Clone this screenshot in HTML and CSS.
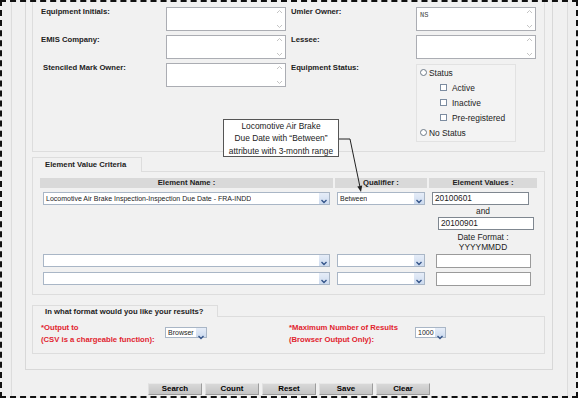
FILE: index.html
```html
<!DOCTYPE html>
<html>
<head>
    <title>Equipment Search</title>
    <link rel="stylesheet" href="styles.css">
</head>
<body>
<div class="page">
    <div class="outer">
        <div class="form">
            <div class="section top">
                <div class="col">
                    <div class="row">
                        <div class="lbl">Equipment Initials:</div>
                        <div class="ta"><span class="ta-val"></span><span class="ta-bar"><svg width="7" height="22" viewBox="0 0 7 22"><path d="M1 5 L3.5 2.5 L6 5" /><path d="M1 17 L3.5 19.5 L6 17" /></svg></span></div>
                    </div>
                    <div class="row">
                        <div class="lbl">EMIS Company:</div>
                        <div class="ta"><span class="ta-val"></span><span class="ta-bar"><svg width="7" height="22" viewBox="0 0 7 22"><path d="M1 5 L3.5 2.5 L6 5" /><path d="M1 17 L3.5 19.5 L6 17" /></svg></span></div>
                    </div>
                    <div class="row">
                        <div class="lbl lbl-shift">Stenciled Mark Owner:</div>
                        <div class="ta"><span class="ta-val"></span><span class="ta-bar"><svg width="7" height="22" viewBox="0 0 7 22"><path d="M1 5 L3.5 2.5 L6 5" /><path d="M1 17 L3.5 19.5 L6 17" /></svg></span></div>
                    </div>
                </div>
                <div class="col">
                    <div class="row">
                        <div class="lbl">Umler Owner:</div>
                        <div class="ta"><span class="ta-val">NS</span><span class="ta-bar"><svg width="7" height="22" viewBox="0 0 7 22"><path d="M1 5 L3.5 2.5 L6 5" /><path d="M1 17 L3.5 19.5 L6 17" /></svg></span></div>
                    </div>
                    <div class="row">
                        <div class="lbl">Lessee:</div>
                        <div class="ta"><span class="ta-val"></span><span class="ta-bar"><svg width="7" height="22" viewBox="0 0 7 22"><path d="M1 5 L3.5 2.5 L6 5" /><path d="M1 17 L3.5 19.5 L6 17" /></svg></span></div>
                    </div>
                    <div class="row">
                        <div class="lbl">Equipment Status:</div>
                        <div class="status">
                            <div class="opt"><span class="radio"></span>Status</div>
                            <div class="opt sub"><span class="check"></span>Active</div>
                            <div class="opt sub"><span class="check"></span>Inactive</div>
                            <div class="opt sub"><span class="check"></span>Pre-registered</div>
                            <div class="opt"><span class="radio"></span>No Status</div>
                        </div>
                    </div>
                </div>
            </div>

            <div class="group crit">
                <div class="tab tab-crit">Element Value Criteria</div>
                <div class="panel crit-panel">
                    <div class="grid">
                        <div class="th">Element Name :</div>
                        <div class="th">Qualifier :</div>
                        <div class="th">Element Values :</div>
                    </div>
                    <div class="grid r1">
                        <div><div class="sel sel-name"><span class="sel-text">Locomotive Air Brake Inspection-Inspection Due Date - FRA-INDD</span><span class="sel-btn"><svg width="10" height="11" viewBox="0 0 10 11"><path d="M2.5 4 L5 6.5 L7.5 4" /></svg></span></div></div>
                        <div><div class="sel sel-qual"><span class="sel-text">Between</span><span class="sel-btn"><svg width="10" height="11" viewBox="0 0 10 11"><path d="M2.5 4 L5 6.5 L7.5 4" /></svg></span></div></div>
                        <div class="values">
                            <div class="inp inp-a">20100601</div>
                            <div class="vtext and">and</div>
                            <div class="inp inp-b">20100901</div>
                            <div class="vtext fmt">Date Format :</div>
                            <div class="vtext fmt">YYYYMMDD</div>
                        </div>
                    </div>
                    <div class="grid r2">
                        <div><div class="sel sel-name"><span class="sel-text"></span><span class="sel-btn"><svg width="10" height="11" viewBox="0 0 10 11"><path d="M2.5 4 L5 6.5 L7.5 4" /></svg></span></div></div>
                        <div><div class="sel sel-qual"><span class="sel-text"></span><span class="sel-btn"><svg width="10" height="11" viewBox="0 0 10 11"><path d="M2.5 4 L5 6.5 L7.5 4" /></svg></span></div></div>
                        <div><div class="inp inp-c"></div></div>
                    </div>
                    <div class="grid r3">
                        <div><div class="sel sel-name"><span class="sel-text"></span><span class="sel-btn"><svg width="10" height="11" viewBox="0 0 10 11"><path d="M2.5 4 L5 6.5 L7.5 4" /></svg></span></div></div>
                        <div><div class="sel sel-qual"><span class="sel-text"></span><span class="sel-btn"><svg width="10" height="11" viewBox="0 0 10 11"><path d="M2.5 4 L5 6.5 L7.5 4" /></svg></span></div></div>
                        <div><div class="inp inp-c"></div></div>
                    </div>
                </div>
            </div>

            <div class="group results">
                <div class="tab tab-res">In what format would you like your results?</div>
                <div class="panel res-panel">
                    <div class="res-col">
                        <div class="req">*Output to<br>(CSV is a chargeable function):</div>
                        <div class="sel sel-small sel-browser"><span class="sel-text">Browser</span><span class="sel-btn"><svg width="10" height="9" viewBox="0 0 10 9"><path d="M2.5 3 L5 5.5 L7.5 3" /></svg></span></div>
                    </div>
                    <div class="res-col">
                        <div class="req req-wide">*Maximum Number of Results<br>(Browser Output Only):</div>
                        <div class="sel sel-small sel-max"><span class="sel-text">1000</span><span class="sel-btn"><svg width="10" height="9" viewBox="0 0 10 9"><path d="M2.5 3 L5 5.5 L7.5 3" /></svg></span></div>
                    </div>
                </div>
            </div>
        </div>

        <div class="buttons">
            <button>Search</button>
            <button>Count</button>
            <button>Reset</button>
            <button>Save</button>
            <button>Clear</button>
        </div>
    </div>

    <!-- annotation over the form -->
    <div class="callout">Locomotive Air Brake<br>Due Date with “Between”<br>attribute with 3-month range</div>
    <svg class="callout-arrow" width="40" height="66" viewBox="0 0 40 66">
        <polyline points="7,7 18,7 27.8,54.1" fill="none" stroke="#222" stroke-width="1"/>
        <polygon points="29,60 30.2,53.6 25.3,54.6" fill="#222"/>
    </svg>
</div>
</body>
</html>
```

FILE: styles.css
```css
body {
    margin: 0;
    font-family: "Liberation Sans", Arial, sans-serif;
    color: #222;
}

.page {
    width: 578px;
    height: 398px;
    box-sizing: border-box;
    border: 2px dashed #111;
    background-color: #eeeeee;
    position: relative;
    overflow: hidden;
}

.outer {
    height: 100%;
    margin: 0 8px 0 9px;
    padding: 0 14px 0 13px;
    border-left: 1px solid #dcdcdc;
    border-right: 1px solid #dcdcdc;
    background-color: #f0f0f0;
}

.form {
    padding: 0 7px 15px 6px;
    border: 1px solid #d8d8d8;
    border-top: none;
    background-color: #f1f1f1;
}

/* top block: equipment fields */
.section.top {
    display: flex;
    padding: 5px 0 9px 8px;
    border: 1px solid #dddddd;
    border-top: none;
}

.col {
    width: 250px;
}

.row {
    display: flex;
    margin-bottom: 4px;
}

.row:last-child {
    margin-bottom: 0;
}

.lbl {
    width: 125px;
    font-size: 7.7px;
    font-weight: bold;
    line-height: 10px;
    padding-top: 0;
}

.lbl-shift {
    padding-left: 2px;
    width: 123px;
}

.ta {
    width: 120px;
    height: 24px;
    box-sizing: border-box;
    border: 1px solid #abadb3;
    background-color: #fff;
    display: flex;
    justify-content: space-between;
}

.ta-val {
    font-family: "Liberation Mono", monospace;
    font-size: 7px;
    color: #444;
    padding: 3px 0 0 3px;
}

.ta-bar {
    width: 9px;
}

.ta-bar svg path {
    fill: none;
    stroke: #c4c4c4;
    stroke-width: 1;
}

.status {
    width: 100px;
    height: 78px;
    box-sizing: border-box;
    margin-top: 1px;
    border: 1px solid #e2e2e2;
    background-color: #f3f3f3;
    padding-left: 3px;
}

.opt {
    display: flex;
    align-items: center;
    height: 15px;
    font-size: 8.4px;
}

.opt.sub {
    padding-left: 20px;
}

.radio {
    width: 7px;
    height: 7px;
    box-sizing: border-box;
    border: 1px solid #6d7a88;
    border-radius: 50%;
    background-color: #fff;
    margin-right: 2px;
}

.check {
    width: 7px;
    height: 7px;
    box-sizing: border-box;
    border: 1px solid #7c8ca0;
    background-color: #fff;
    margin-right: 5px;
}

/* tabbed groups */
.group.crit {
    margin-top: 5px;
}

.group.results {
    margin-top: 10px;
}

.tab {
    position: relative;
    box-sizing: border-box;
    border: 1px solid #dddddd;
    border-bottom: none;
    background-color: #f1f1f1;
    margin-bottom: -1px;
    padding-left: 12px;
    font-size: 7.7px;
    font-weight: bold;
}

.tab-crit {
    width: 110px;
    height: 15px;
    line-height: 14px;
}

.tab-res {
    width: 186px;
    height: 12px;
    line-height: 12px;
}

.panel {
    border: 1px solid #dddddd;
}

.crit-panel {
    padding: 6px 6px 8px 7px;
}

.grid {
    display: grid;
    grid-template-columns: 293px 92px 108px;
    column-gap: 2px;
}

.th {
    height: 10px;
    line-height: 10px;
    background-color: #d9d9d9;
    text-align: center;
    font-size: 7.7px;
    font-weight: bold;
}

.r1 {
    margin-top: 4px;
}

.r2 {
    margin-top: 2px;
}

.r3 {
    margin-top: 4px;
}

.sel {
    height: 13px;
    box-sizing: border-box;
    border: 1px solid #a9b6c6;
    background-color: #fff;
    display: flex;
    justify-content: space-between;
}

.sel-name {
    margin: 0 3px;
}

.sel-qual {
    margin: 0 2px;
}

.sel-text {
    font-size: 7px;
    line-height: 11px;
    padding-left: 2px;
    white-space: nowrap;
    overflow: hidden;
}

.sel-btn {
    width: 10px;
    background: linear-gradient(#e6edf8, #cddbef);
}

.sel-btn svg path {
    fill: none;
    stroke: #35558a;
    stroke-width: 1.4;
}

.inp {
    height: 13px;
    box-sizing: border-box;
    border: 1px solid #7f8790;
    background-color: #fff;
    font-size: 8.3px;
    line-height: 11px;
    padding-left: 2px;
}

.inp-a {
    width: 97px;
    margin-left: 3px;
}

.inp-b {
    width: 96px;
    margin-left: 9px;
}

.inp-c {
    width: 95px;
    height: 14px;
    margin-left: 7px;
    border-color: #9a9a9a;
}

.vtext {
    text-align: center;
    font-size: 8.4px;
}

.vtext.and {
    line-height: 12px;
}

.vtext.fmt {
    line-height: 10px;
}

.inp-b + .fmt {
    margin-top: 2px;
}

/* results */
.res-panel {
    display: flex;
    padding: 5px 0 7px 8px;
}

.res-col {
    display: flex;
    width: 248px;
}

.req {
    width: 124px;
    color: #e1242f;
    font-size: 7.7px;
    font-weight: bold;
    line-height: 12px;
}

.req-wide {
    width: 126px;
}

.sel-small {
    height: 11px;
    margin-top: 5px;
}

.sel-small .sel-text {
    line-height: 9px;
}

.sel-browser {
    width: 42px;
}

.sel-max {
    width: 31px;
}

.buttons {
    display: flex;
    justify-content: center;
    gap: 3px;
    margin-top: 13px;
}

button {
    width: 54px;
    height: 12px;
    padding: 0;
    border: 1px solid #9c9c9c;
    border-top-color: #e8e8e8;
    border-left-color: #e0e0e0;
    background: linear-gradient(#d8d8d8, #c4c4c4);
    font-family: "Liberation Sans", Arial, sans-serif;
    font-size: 7.9px;
    font-weight: bold;
    color: #000;
    line-height: 10px;
}

.callout {
    position: absolute;
    left: 221px;
    top: 117px;
    width: 114px;
    height: 36px;
    border: 1px solid #555;
    background-color: #fff;
    text-align: center;
    font-size: 8.4px;
    line-height: 12.3px;
    color: #222;
}

.callout-arrow {
    position: absolute;
    left: 330px;
    top: 130px;
}
```
